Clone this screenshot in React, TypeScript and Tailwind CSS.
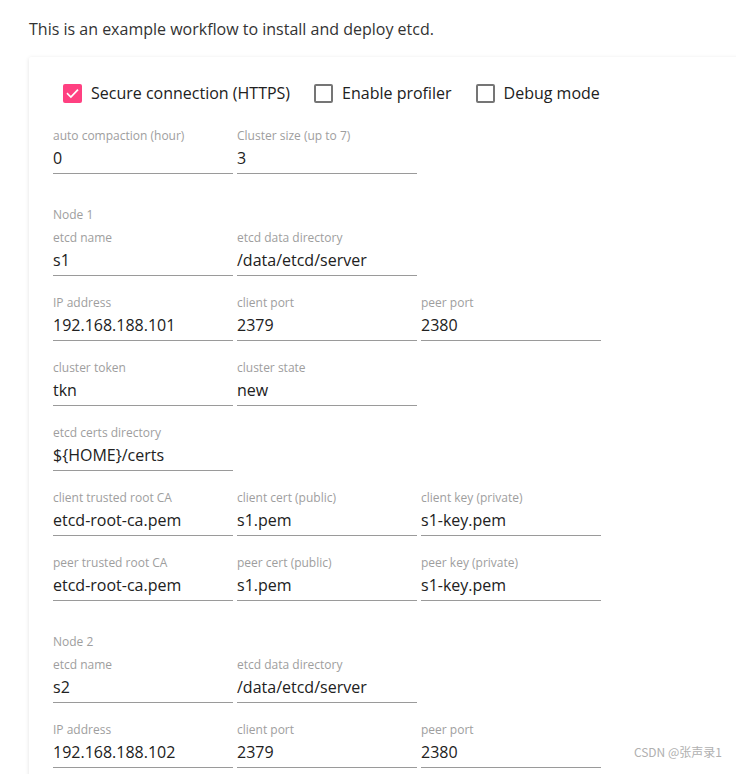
import React from "react";

type F = { label: string; value: string };

function Field({ label, value }: F) {
  return (
    <div className="w-[180px]">
      <div className="pt-[1px] text-[12px] leading-[14px] text-[#9e9e9e] whitespace-nowrap">{label}</div>
      <div className="mt-[4px] text-[16px] leading-[22px] pb-[4px] border-b border-[#9a9a9a] text-[#212121] whitespace-nowrap">
        {value}
      </div>
    </div>
  );
}

function Row({ fields }: { fields: F[] }) {
  return (
    <div className="flex gap-[4px] pb-[19px]">
      {fields.map((f, i) => (
        <Field key={i} {...f} />
      ))}
    </div>
  );
}

function NodeTitle({ t }: { t: string }) {
  return <div className="pt-[14px] pb-[7px] text-[12px] leading-[16px] text-[#9e9e9e]">{t}</div>;
}

function Check({ checked, label }: { checked?: boolean; label: string }) {
  return (
    <div className="flex items-center gap-[9px]">
      {checked ? (
        <div className="w-[19px] h-[19px] rounded-[2px] bg-[#ff4081] flex items-center justify-center">
          <svg width="13" height="13" viewBox="0 0 24 24" fill="none" stroke="white" strokeWidth="3.2" strokeLinecap="square">
            <path d="M3 12.5l6 6L21 6" />
          </svg>
        </div>
      ) : (
        <div className="w-[19px] h-[19px] rounded-[2px] border-2 border-[#757575]" />
      )}
      <span className="text-[16px] leading-[22px] text-[#212121]">{label}</span>
    </div>
  );
}

export default function App() {
  return (
    <div
      className="relative w-[736px] h-[774px] overflow-hidden bg-white"
      style={{ fontFamily: '"Open Sans", "Noto Sans", "Noto Sans CJK SC", sans-serif' }}
    >
      <p className="pl-[29px] pt-[17px] text-[16px] leading-[24px] text-[#333]">
        This is an example workflow to install and deploy etcd.
      </p>
      <div className="ml-[29px] mt-[16px] w-[740px] bg-white rounded-[2px] shadow-[0_1px_4px_rgba(0,0,0,0.12)] pl-[24px] pt-[25px] pb-[60px]">
        <div className="flex gap-[24px] pl-[10px] mb-[24px]">
          <Check checked label="Secure connection (HTTPS)" />
          <Check label="Enable profiler" />
          <Check label="Debug mode" />
        </div>
        <Row
          fields={[
            { label: "auto compaction (hour)", value: "0" },
            { label: "Cluster size (up to 7)", value: "3" },
          ]}
        />
        <NodeTitle t="Node 1" />
        <Row
          fields={[
            { label: "etcd name", value: "s1" },
            { label: "etcd data directory", value: "/data/etcd/server" },
          ]}
        />
        <Row
          fields={[
            { label: "IP address", value: "192.168.188.101" },
            { label: "client port", value: "2379" },
            { label: "peer port", value: "2380" },
          ]}
        />
        <Row
          fields={[
            { label: "cluster token", value: "tkn" },
            { label: "cluster state", value: "new" },
          ]}
        />
        <Row fields={[{ label: "etcd certs directory", value: "${HOME}/certs" }]} />
        <Row
          fields={[
            { label: "client trusted root CA", value: "etcd-root-ca.pem" },
            { label: "client cert (public)", value: "s1.pem" },
            { label: "client key (private)", value: "s1-key.pem" },
          ]}
        />
        <Row
          fields={[
            { label: "peer trusted root CA", value: "etcd-root-ca.pem" },
            { label: "peer cert (public)", value: "s1.pem" },
            { label: "peer key (private)", value: "s1-key.pem" },
          ]}
        />
        <NodeTitle t="Node 2" />
        <Row
          fields={[
            { label: "etcd name", value: "s2" },
            { label: "etcd data directory", value: "/data/etcd/server" },
          ]}
        />
        <Row
          fields={[
            { label: "IP address", value: "192.168.188.102" },
            { label: "client port", value: "2379" },
            { label: "peer port", value: "2380" },
          ]}
        />
      </div>
      <div
        className="absolute right-[14px] top-[744px] text-[12px] leading-[16px] text-[#b0b0b0]"
        style={{ fontFamily: '"Noto Sans CJK SC", sans-serif' }}
      >
        CSDN @张声录1
      </div>
    </div>
  );
}
